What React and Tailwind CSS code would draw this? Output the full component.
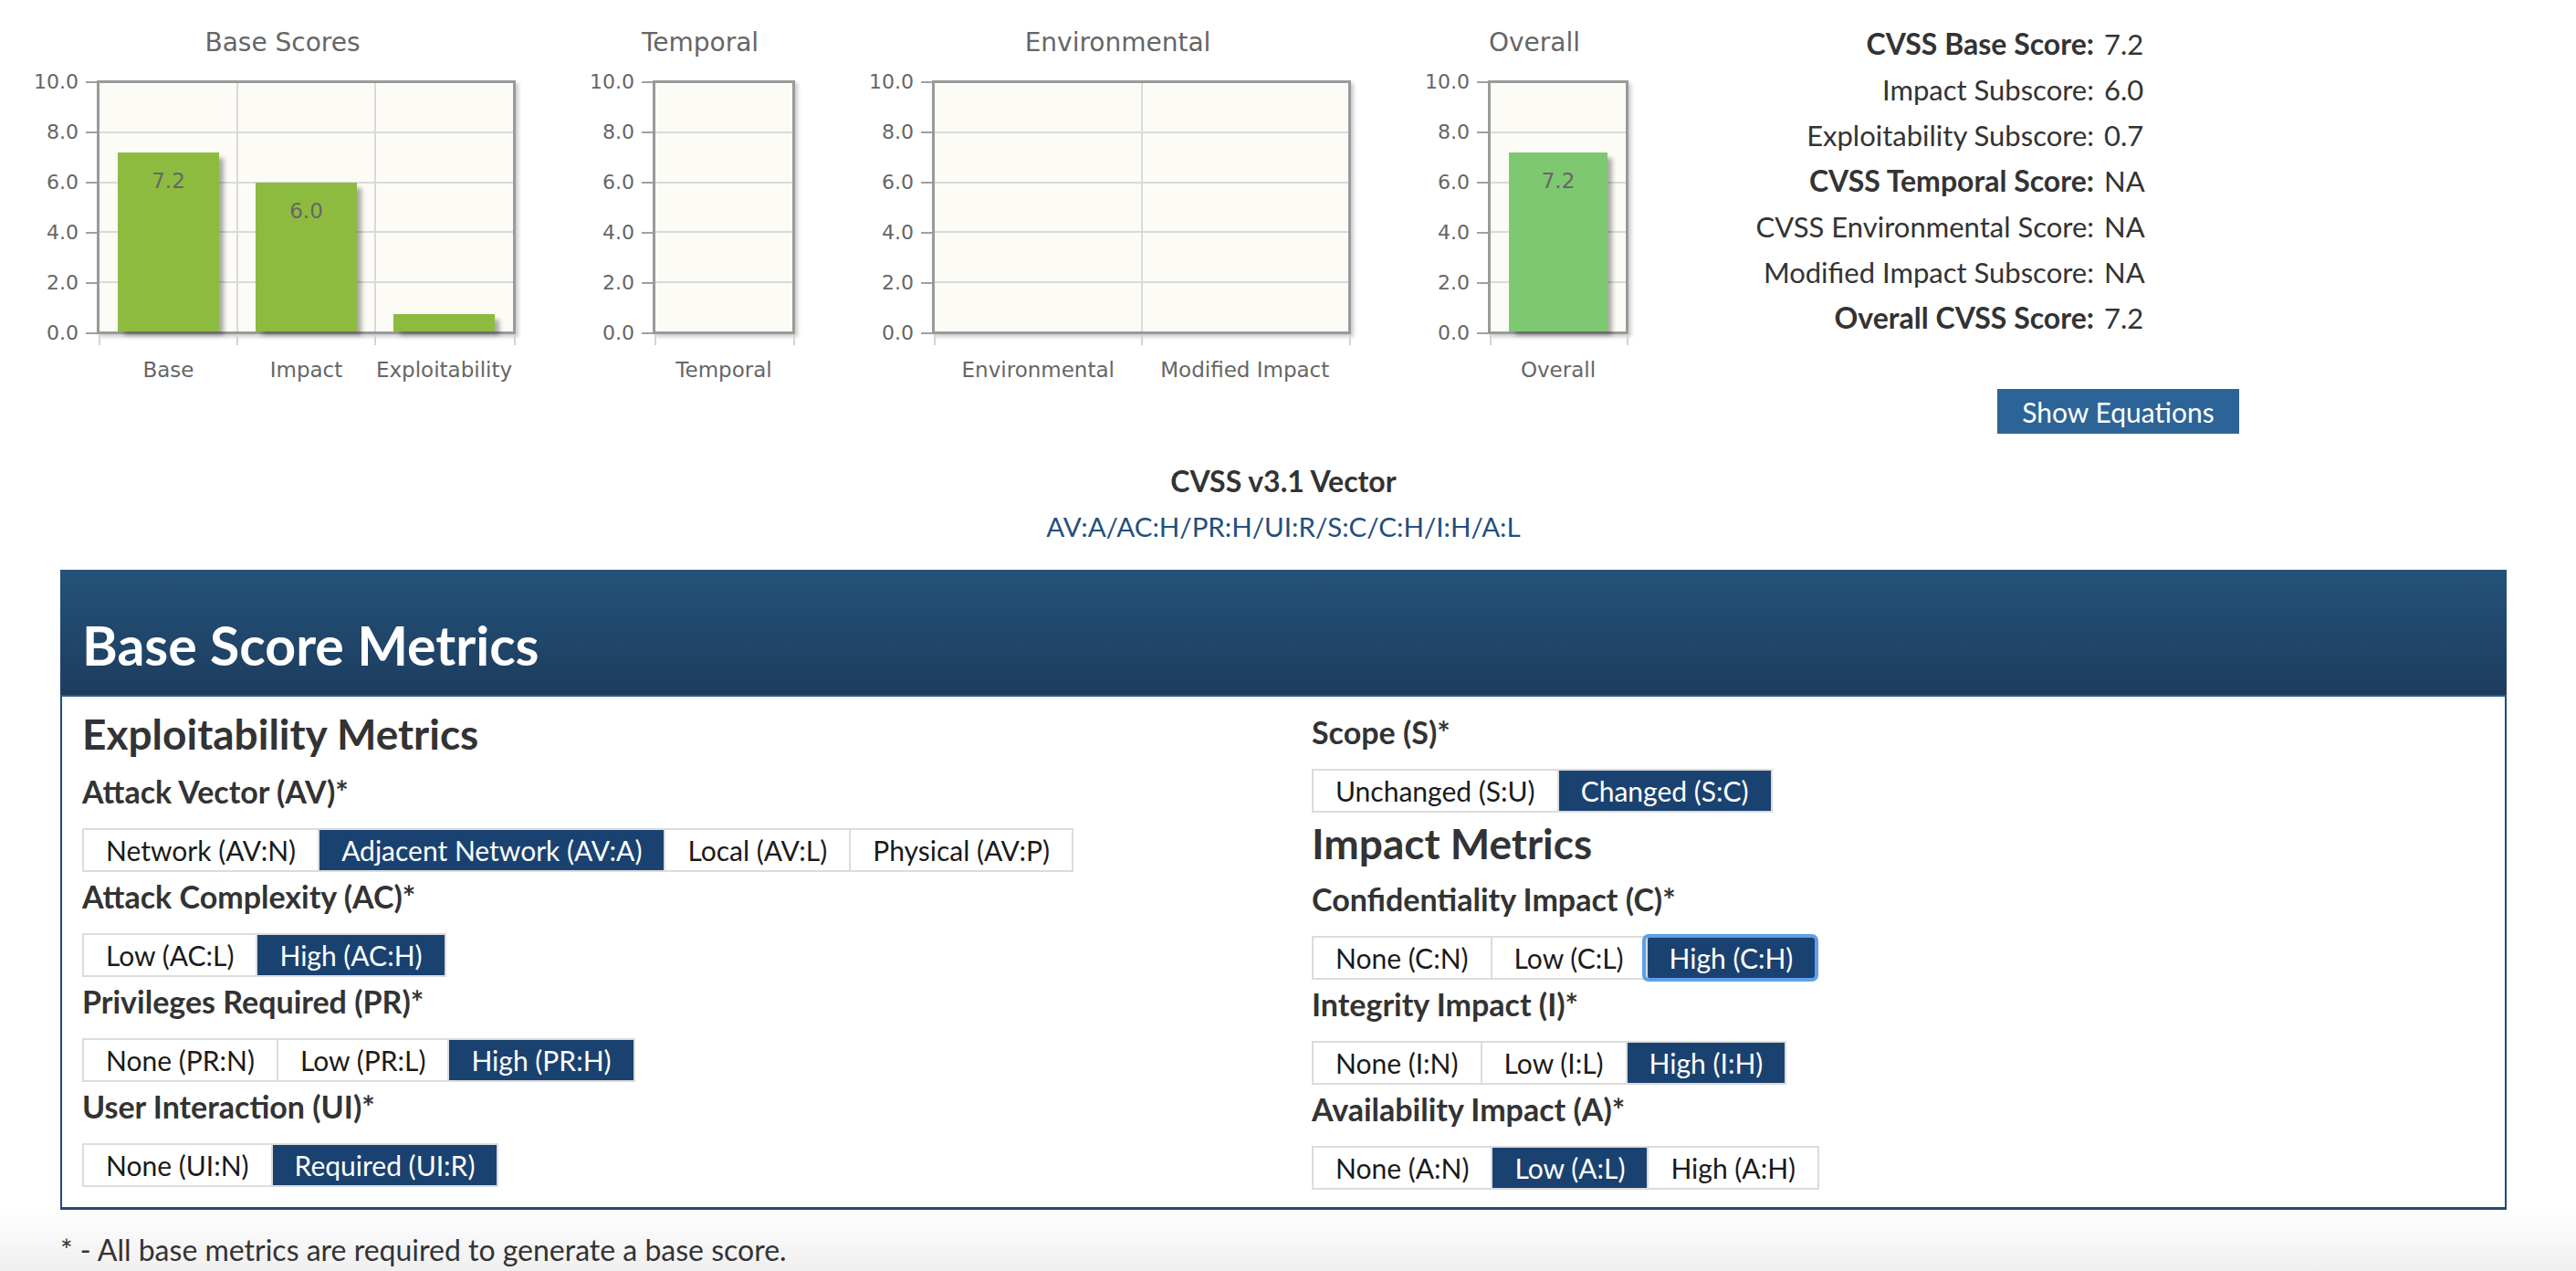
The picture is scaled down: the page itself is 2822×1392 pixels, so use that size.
import React from 'react'

const H = 278

function Chart({ title, plotW, plotClass, cats, bars = [], color }) {
  const inner = plotW - 6
  const cw = inner / cats.length
  const bw = cw * 0.73
  const innerH = H - 6
  return (
    <div className="flex flex-col font-['DejaVu_Sans',sans-serif] text-[#666]">
      <div className="h-[88px] pt-[6px] flex items-center justify-center text-[28px]">{title}</div>
      <div className="flex">
        <div className="relative w-[48px] h-[278px]">
          {[10, 8, 6, 4, 2, 0].map((v, i) => (
            <div key={v} className="absolute right-0 leading-[24px] text-[22px]" style={{ top: 1.5 + i * 55 - 12 }}>
              {v.toFixed(1)}
            </div>
          ))}
        </div>
        <div className="relative w-[20px] h-[278px]">
          {[0, 1, 2, 3, 4, 5].map((i) => (
            <div key={i} className="absolute left-[8px] w-[12px] h-[2px] bg-[#a0a0a0]" style={{ top: 0.5 + i * 55 }} />
          ))}
        </div>
        <div className={`relative h-[278px] border-[3px] border-[#9a9a9a] bg-[#fcfbf6] shadow-[3px_3px_4px_rgba(0,0,0,0.2)] ${plotClass}`}>
          {[1, 2, 3, 4].map((j) => (
            <div key={j} className="absolute left-0 right-0 h-[2px] bg-[#dadada]" style={{ top: j * (innerH / 5) - 1 }} />
          ))}
          {cats.slice(1).map((c, i) => (
            <div key={c} className="absolute top-0 bottom-0 w-[2px] bg-[#dadada]" style={{ left: (i + 1) * cw - 1 }} />
          ))}
          {bars.map((v, i) => v == null ? null : (
            <div
              key={i}
              className={`absolute bottom-0 shadow-[6px_5px_5px_-1px_rgba(0,0,0,0.33)] ${color}`}
              style={{ left: i * cw + (cw - bw) / 2, width: bw, height: (v / 10) * innerH }}
            >
              {v >= 1 && (
                <div className="absolute left-0 right-0 top-[19px] text-center text-[23px] leading-[24px] text-[#666]">{v.toFixed(1)}</div>
              )}
            </div>
          ))}
        </div>
        <div className="w-[16px]" />
      </div>
      <div className="relative h-[78px]">
        {cats.map((c, i) => (
          <div key={'t' + c} className="absolute top-0 w-[2px] h-[12px] bg-[#d4d4d4]" style={{ left: 68 + 2 + i * cw }} />
        ))}
        <div className="absolute top-0 w-[2px] h-[12px] bg-[#d4d4d4]" style={{ left: 68 + plotW - 2 }} />
        {cats.map((c, i) => (
          <div
            key={c}
            className="absolute top-[26px] leading-[26px] text-[23px] whitespace-nowrap -translate-x-1/2"
            style={{ left: 68 + 3 + (i + 0.5) * cw }}
          >
            {c}
          </div>
        ))}
      </div>
    </div>
  )
}

function Group({ opts, sel, focus }) {
  return (
    <div className="inline-flex border-2 border-[#dcdcdc] bg-white">
      {opts.map((o, i) => {
        const on = o === sel
        return (
          <div
            key={o}
            className={`h-[44px] px-[24px] flex items-center text-[30px] whitespace-nowrap ${i > 0 ? 'border-l-2 border-[#dcdcdc]' : ''} ${on ? 'bg-[#1a4270] text-white' : 'text-[#1a1a1a]'} ${on && focus ? 'relative z-10 rounded-[3px] ring-[4px] ring-[#5f9fea] border-l-0' : ''}`}
          >
            {o}
          </div>
        )
      })}
    </div>
  )
}

function Metric({ label, opts, sel, focus, first }) {
  return (
    <div className={first ? '' : 'mt-[5px]'}>
      <div className="text-[34px] font-bold leading-[44px] mb-[18px]">{label}</div>
      <Group opts={opts} sel={sel} focus={focus} />
    </div>
  )
}

const scores = [
  ['CVSS Base Score:', '7.2', true],
  ['Impact Subscore:', '6.0'],
  ['Exploitability Subscore:', '0.7'],
  ['CVSS Temporal Score:', 'NA', true],
  ['CVSS Environmental Score:', 'NA'],
  ['Modified Impact Subscore:', 'NA'],
  ['Overall CVSS Score:', '7.2', true],
]

export default function App() {
  return (
    <div className="min-h-[1392px] bg-white font-['Lato',sans-serif] text-[#333]">
      <div className="flex items-start">
        <div className="flex gap-[66px] pl-[38px]">
          <Chart title="Base Scores" plotW={459} plotClass="w-[459px]" cats={['Base', 'Impact', 'Exploitability']} bars={[7.2, 6.0, 0.7]} color="bg-[#8dbb40]" />
          <Chart title="Temporal" plotW={156} plotClass="w-[156px]" cats={['Temporal']} />
          <Chart title="Environmental" plotW={459} plotClass="w-[459px]" cats={['Environmental', 'Modified Impact']} />
          <Chart title="Overall" plotW={154} plotClass="w-[154px]" cats={['Overall']} bars={[7.2]} color="bg-[#7fc872]" />
        </div>
        <div className="ml-[62px] pt-[23px]">
          <div className="grid grid-cols-[432px_auto] gap-x-[11px] text-[31px] leading-[50px]">
            {scores.map(([k, v, b]) => (
              <React.Fragment key={k}>
                <div className={`text-right ${b ? 'font-bold text-[32px]' : ''}`}>{k}</div>
                <div>{v}</div>
              </React.Fragment>
            ))}
          </div>
          <button className="mt-[53px] ml-[326px] w-[265px] h-[49px] bg-[#2d6497] text-white text-[30px] leading-none">
            Show Equations
          </button>
        </div>
      </div>

      <div className="ml-[66px] w-[2680px]">
        <div className="mt-[32px] text-center">
          <div className="text-[32px] font-bold leading-[40px]">CVSS v3.1 Vector</div>
          <div className="mt-[10px] text-[29.5px] leading-[40px] text-[#234e7d]">AV:A/AC:H/PR:H/UI:R/S:C/C:H/I:H/A:L</div>
        </div>

        <div className="mt-[27px]">
          <div className="h-[139px] bg-linear-to-b from-[#24527a] to-[#1d3d5e] border-b-2 border-[#2c5d8a] pl-[24px] pt-[53px]">
            <h2 className="text-white font-bold text-[59px] leading-none">Base Score Metrics</h2>
          </div>
          <div className="grid grid-cols-[1347px_1fr] border-x-2 border-b-[3px] border-[#234b76] pl-[22px] pt-[17px] pb-[19px]">
            <div className="flex flex-col items-start">
              <h3 className="text-[46px] font-bold leading-[48px] mb-[17px]">Exploitability Metrics</h3>
              <Metric first label="Attack Vector (AV)*" opts={['Network (AV:N)', 'Adjacent Network (AV:A)', 'Local (AV:L)', 'Physical (AV:P)']} sel="Adjacent Network (AV:A)" />
              <Metric label="Attack Complexity (AC)*" opts={['Low (AC:L)', 'High (AC:H)']} sel="High (AC:H)" />
              <Metric label="Privileges Required (PR)*" opts={['None (PR:N)', 'Low (PR:L)', 'High (PR:H)']} sel="High (PR:H)" />
              <Metric label="User Interaction (UI)*" opts={['None (UI:N)', 'Required (UI:R)']} sel="Required (UI:R)" />
            </div>
            <div className="flex flex-col items-start">
              <Metric first label="Scope (S)*" opts={['Unchanged (S:U)', 'Changed (S:C)']} sel="Changed (S:C)" />
              <h3 className="text-[46px] font-bold leading-[48px] mt-[10px] mb-[15px]">Impact Metrics</h3>
              <Metric first label="Confidentiality Impact (C)*" opts={['None (C:N)', 'Low (C:L)', 'High (C:H)']} sel="High (C:H)" focus />
              <Metric label="Integrity Impact (I)*" opts={['None (I:N)', 'Low (I:L)', 'High (I:H)']} sel="High (I:H)" />
              <Metric label="Availability Impact (A)*" opts={['None (A:N)', 'Low (A:L)', 'High (A:H)']} sel="Low (A:L)" />
            </div>
          </div>
        </div>
      </div>

      <div className="h-[68px] pt-[24px] pl-[66px] bg-linear-to-b from-white to-[#efefef]">
        <p className="text-[32px] leading-[40px] text-[#333]">* - All base metrics are required to generate a base score.</p>
      </div>
    </div>
  )
}
